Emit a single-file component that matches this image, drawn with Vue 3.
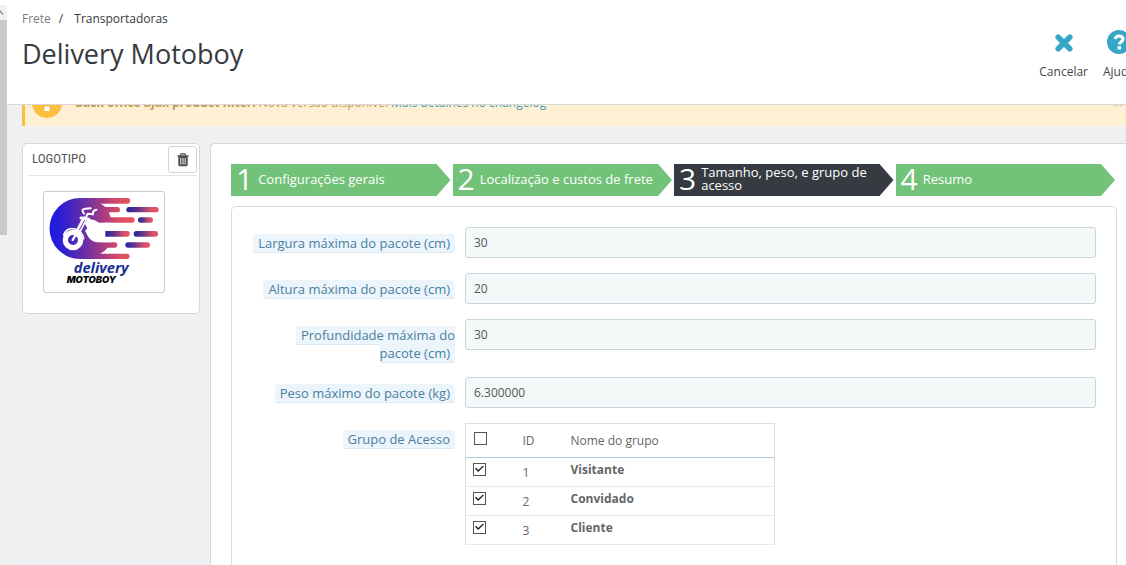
<script setup>
import { ref, computed } from 'vue'

const steps = [
  { n: 1, label: 'Configurações gerais' },
  { n: 2, label: 'Localização e custos de frete' },
  { n: 3, label: 'Tamanho, peso, e grupo de acesso' },
  { n: 4, label: 'Resumo' },
]
const current = ref(3)

const fields = ref([
  { id: 'max_width', label: 'Largura máxima do pacote (cm)', value: '30' },
  { id: 'max_height', label: 'Altura máxima do pacote (cm)', value: '20' },
  { id: 'max_depth', label: 'Profundidade máxima do pacote (cm)', value: '30' },
  { id: 'max_weight', label: 'Peso máximo do pacote (kg)', value: '6.300000' },
])

const groups = ref([
  { id: 1, name: 'Visitante', checked: true },
  { id: 2, name: 'Convidado', checked: true },
  { id: 3, name: 'Cliente', checked: true },
])
const touched = ref(false)
const all = computed({
  get: () => touched.value && groups.value.every((g) => g.checked),
  set: (v) => {
    touched.value = true
    groups.value.forEach((g) => (g.checked = v))
  },
})
</script>

<template>
  <div class="app">
    <div class="scroll" aria-hidden="true">
      <div class="scroll-arrow">
        <svg width="7" height="15" viewBox="0 0 7 15"><path d="M-3 9.500L0 6l3 3.500" fill="none" stroke="#999" stroke-width="1.500" /></svg>
      </div>
      <div class="scroll-thumb"></div>
    </div>

    <div class="page">
      <header class="head">
        <div class="titles">
          <nav class="crumbs">
            <a href="#">Frete</a><span class="sep">/</span><a href="#" class="here">Transportadoras</a>
          </nav>
          <h1>Delivery Motoboy</h1>
        </div>
        <div class="tools">
          <button type="button" class="tool">
            <svg width="20" height="26" viewBox="0 0 20 26">
              <path d="M4.200 7.200L15.800 18.800M15.800 7.200L4.200 18.800" stroke="#35a6c6" stroke-width="5.600" stroke-linecap="round" />
            </svg>
            <span>Cancelar</span>
          </button>
          <button type="button" class="tool">
            <svg width="26" height="26" viewBox="0 0 26 26">
              <circle cx="13" cy="12" r="12" fill="#35a6c6" />
              <path d="M9 8.900C9.700 7 11.200 6 13 6c2.400 0 4 1.200 4 3.100 0 2.700-3.600 2.600-3.600 5.400" fill="none" stroke="#fff" stroke-width="3.200" />
              <rect x="11.600" y="16.200" width="3.500" height="3.300" fill="#fff" />
            </svg>
            <span>Ajuda</span>
          </button>
        </div>
      </header>

      <div class="alert" role="alert">
        <svg class="alert-icon" width="30" height="30" viewBox="0 0 30 30">
          <circle cx="15" cy="15" r="15" fill="#fbbf3f" />
          <path d="M12.500 6h5l-.6 10.500h-3.800z" fill="#fff" />
          <rect x="12.500" y="18.500" width="5" height="4.500" fill="#fff" />
        </svg>
        <p><b>Back office ajax product filter:</b> Nova versão disponível <a href="#">Mais detalhes no changelog</a></p>
        <button type="button" class="close" aria-label="Fechar">×</button>
      </div>

      <div class="columns">
        <aside class="card">
          <div class="card-head">
            <h2>LOGOTIPO</h2>
            <button type="button" class="trash" aria-label="Excluir logotipo">
              <svg width="12" height="14" viewBox="0 0 12 14">
                <path d="M3.700 2.500V1.400q0-.6.600-.6h3.400q.6 0 .6.600v1.100" fill="none" stroke="#4b4e52" stroke-width="1.200" />
                <path d="M.5 2.200h11v1.600h-.8v8q0 1.400-1.300 1.400H2.600q-1.300 0-1.300-1.400v-8H.5z" fill="#4b4e52" />
                <path d="M3.800 5v6.500M6 5v6.500M8.200 5v6.500" stroke="#fff" stroke-width=".9" />
              </svg>
            </button>
          </div>
          <div class="thumb">
            <svg width="120" height="100" viewBox="133 187 360 300" role="img" aria-label="Delivery Motoboy">
              <defs>
                <linearGradient id="body" gradientUnits="userSpaceOnUse" x1="150" y1="0" x2="400" y2="0">
                  <stop offset="0" stop-color="#1c1ae4" />
                  <stop offset=".15" stop-color="#2d20d0" />
                  <stop offset=".4" stop-color="#642daa" />
                  <stop offset=".62" stop-color="#a03a86" />
                  <stop offset=".82" stop-color="#d84d66" />
                  <stop offset="1" stop-color="#e8545a" />
                </linearGradient>
                <linearGradient id="dash">
                  <stop offset="0" stop-color="#27249b" />
                  <stop offset=".3" stop-color="#55308f" />
                  <stop offset=".75" stop-color="#d0506c" />
                  <stop offset="1" stop-color="#ea5560" />
                </linearGradient>
              </defs>
              <path fill="url(#body)" d="M241 205H383a8.500 8.500 0 0 1 0 17H302Q311 226 317 232H353a8 8 0 0 1 0 16H327Q331 255 333 263H397a8 8 0 0 1 0 16H300V338H345a8 8 0 0 1 0 16H324Q314 366 302 372H382a8 8 0 0 1 0 16H241A91.500 91.500 0 0 1 241 205Z" />
              <g fill="url(#dash)">
                <rect x="380" y="232" width="97" height="16" rx="8" />
                <rect x="415" y="263" width="45" height="16" rx="8" />
                <rect x="402" y="304" width="73" height="17" rx="8" />
                <rect x="377" y="338" width="74" height="16" rx="8" />
              </g>
              <path fill="#fff" d="M256 283Q260 269 274 269Q287 271 293 276Q302 282 312 279H335V338H292Q276 337 266 322L256 303L263 296Z" />
              <path fill="url(#dash)" d="M317 304H382a8.500 8.500 0 0 1 0 17H317Z" />
              <g fill="none" stroke="#fff" stroke-linecap="round" stroke-linejoin="round">
                <path d="M229 309L253 264" stroke-width="8" />
                <path d="M239 310L260 270" stroke-width="5" />
                <path d="M244 265L267 269" stroke-width="9" />
                <path d="M259 263L264 252L280 254Q278 243 290 240" stroke-width="6" />
                <path d="M253 252Q242 238 257 237L273 236" stroke-width="6" />
                <path d="M192 316Q201 292 226 298Q249 305 252 327" stroke-width="5" />
                <circle cx="220" cy="331" r="23" stroke-width="16" />
                <path d="M219 331L229 314" stroke-width="7" />
              </g>
              <text x="222" y="430" font-family="'Open Sans', sans-serif" font-weight="700" font-style="italic" font-size="44" fill="#1a2f93">delivery</text>
              <text x="201" y="459" font-family="Inter, sans-serif" font-weight="900" font-style="italic" font-size="28" fill="#050505">MOTOBOY</text>
            </svg>
          </div>
        </aside>

        <main class="panel">
          <ol class="steps">
            <li v-for="s in steps" :key="s.n">
              <a href="#" class="step" :class="{ active: s.n === current }" @click.prevent="current = s.n">
                <span class="num">{{ s.n }}</span>
                <span class="step-label">{{ s.label }}</span>
              </a>
            </li>
          </ol>

          <form class="form" @submit.prevent>
            <div v-for="f in fields" :key="f.id" class="row">
              <label :for="f.id" class="label"><span class="chip">{{ f.label }}</span></label>
              <div><input :id="f.id" v-model="f.value" type="text" class="text" /></div>
            </div>
            <div class="row">
              <div id="groups-label" class="label"><span class="chip">Grupo de Acesso</span></div>
              <div>
                <table class="groups" aria-labelledby="groups-label">
                  <thead>
                    <tr>
                      <th class="c-check"><input v-model="all" type="checkbox" aria-label="Selecionar todos" /></th>
                      <th class="c-id">ID</th>
                      <th class="c-name">Nome do grupo</th>
                    </tr>
                  </thead>
                  <tbody>
                    <tr v-for="g in groups" :key="g.id">
                      <td class="c-check"><input :id="'group' + g.id" v-model="g.checked" type="checkbox" /></td>
                      <td class="c-id">{{ g.id }}</td>
                      <td class="c-name"><label :for="'group' + g.id">{{ g.name }}</label></td>
                    </tr>
                  </tbody>
                </table>
              </div>
            </div>
          </form>
        </main>
      </div>
    </div>
  </div>
</template>

<style>
html, body { background: #eff0f2; overflow: hidden; }
</style>

<style scoped>
* { box-sizing: border-box; }
.app {
  display: flex;
  min-height: 100vh;
  font-family: "Open Sans", "Noto Sans", sans-serif;
  font-size: 12px;
  color: #555;
}
h1, h2, p, ol { margin: 0; padding: 0; font-weight: 400; }
button { font: inherit; color: inherit; background: none; border: 0; padding: 0; cursor: pointer; }
a { text-decoration: none; color: inherit; }
svg { display: block; }

.scroll { width: 7px; flex: none; background: #f0f0f0; border-top: 5px solid #fff; }
.scroll-arrow { height: 15px; }
.scroll-thumb { height: 215px; background: #c9c9c9; }

.page { flex: 1; min-width: 0; display: flex; flex-direction: column; overflow: hidden; }
.head {
  position: relative;
  z-index: 1;
  display: flex;
  justify-content: space-between;
  height: 105px;
  padding: 10px 0 0 15px;
  background: #fff;
  border-bottom: 1px solid #d8d9d5;
}
.crumbs { line-height: 18px; color: #363a41; }
.crumbs a:first-child { color: #7b7b7b; }
.crumbs .sep { margin: 0 11px 0 8px; }
h1 { margin-top: 8px; font-size: 27px; line-height: 36px; color: #363a41; }
.tools { display: flex; align-items: flex-start; gap: 15px; margin: 20px -9px 0 0; }
.tool { display: flex; flex-direction: column; align-items: center; gap: 8px; line-height: 16px; color: #454545; }

.alert {
  display: flex;
  align-items: center;
  min-height: 46px;
  margin: -25px 0 0 15px;
  padding: 0 3px 0 7px;
  background: #fff0d3;
  border-left: 3px solid #fbbf3f;
  font-size: 12px;
  line-height: 18px;
  color: #bd9a55;
}
.alert p { flex: 1; margin-left: 13px; white-space: nowrap; }
.alert a { color: #3a9cc0; }
.close { font-size: 17px; line-height: 20px; color: #c9c2b2; }

.columns { flex: 1; display: flex; align-items: flex-start; gap: 10px; margin: 17px 0 0 15px; }
.card {
  flex: none;
  width: 178px;
  padding: 2px 2px 20px;
  background: #fff;
  border: 1px solid #d3d8db;
  border-radius: 5px;
}
.card-head {
  display: flex;
  align-items: flex-start;
  justify-content: space-between;
  height: 30px;
  margin-left: 2px;
  padding-left: 5px;
  border-bottom: 1px solid #e6e6e6;
}
h2 { font-family: "Ubuntu Condensed", "Roboto Condensed", "Noto Sans CJK SC", sans-serif; font-size: 13px; line-height: 26px; color: #555; }
.trash {
  display: grid;
  place-items: center;
  width: 29px;
  height: 27px;
  background: #fff;
  border: 1px solid #d3d5d8;
  border-radius: 3px;
}
.thumb { width: 122px; margin: 15px 0 0 18px; border: 1px solid #ccc; border-radius: 3px; background: #fff; }

.panel {
  flex: 1;
  align-self: stretch;
  min-width: 0;
  padding: 20px 9px 0 20px;
  background: #fff;
  border: 1px solid #d3d8db;
  border-width: 1px 0 0 1px;
  border-radius: 5px 0 0 0;
}
.steps { display: grid; grid-template-columns: repeat(4, 1fr); gap: 2px; list-style: none; margin-right: 2px; }
.step {
  display: flex;
  align-items: center;
  gap: 5px;
  height: 32px;
  padding: 0 18px 2px 5px;
  background: #72c279;
  color: #fff;
  clip-path: polygon(0 0, calc(100% - 14px) 0, 100% 50%, calc(100% - 14px) 100%, 0 100%);
}
.step.active { background: #363a41; }
.num { font-size: 30px; line-height: 32px; }
.step-label { font-size: 13px; line-height: 13px; }

.form {
  display: flex;
  flex-direction: column;
  gap: 15px;
  margin-top: 10px;
  padding: 20px 20px 40px;
  border: 1px solid #d9dadd;
  border-bottom: 0;
  border-radius: 5px 5px 0 0;
}
.row { display: grid; grid-template-columns: 203px minmax(0, 1fr); column-gap: 10px; }
.label { padding-top: 7px; text-align: right; font-size: 13px; line-height: 18px; color: #4b7f9f; }
.chip { padding: 0 5px; background: #ebf5fb; border-bottom: 1px solid #d8e9f3; border-radius: 3px; }
.text {
  display: block;
  width: 100%;
  height: 31px;
  padding: 0 8px;
  font: inherit;
  color: #555;
  background: #f4f8f9;
  border: 1px solid #c7d6db;
  border-radius: 3px;
  outline: 0;
}

.groups { width: 310px; border-collapse: collapse; border: 1px solid #dadcde; }
.groups th, .groups td { padding: 0; text-align: left; font-weight: 400; color: #666; }
.groups th { height: 34px; border-bottom: 1px solid #b3ccd9; }
.groups td { height: 29px; border-bottom: 1px solid #e5eaec; }
.groups .c-check { width: 57px; padding-left: 8px; }
.groups .c-id { width: 48px; }
.groups td.c-check { padding: 0 0 2px 7px; }
.groups td.c-id { position: static; padding-right: 1px; }
.groups label { font-weight: 700; }
.groups td.c-name { padding-bottom: 5px; }
input[type="checkbox"] {
  appearance: none;
  display: grid;
  place-items: center;
  width: 13px;
  height: 13px;
  margin: 0 0 4px;
  background: #fff;
  border: 1px solid #555;
}
input[type="checkbox"]:checked::before {
  content: "";
  width: 9px;
  height: 7px;
  background: #222;
  clip-path: polygon(0 45%, 12% 32%, 36% 66%, 88% 0, 100% 12%, 36% 94%);
}
</style>
